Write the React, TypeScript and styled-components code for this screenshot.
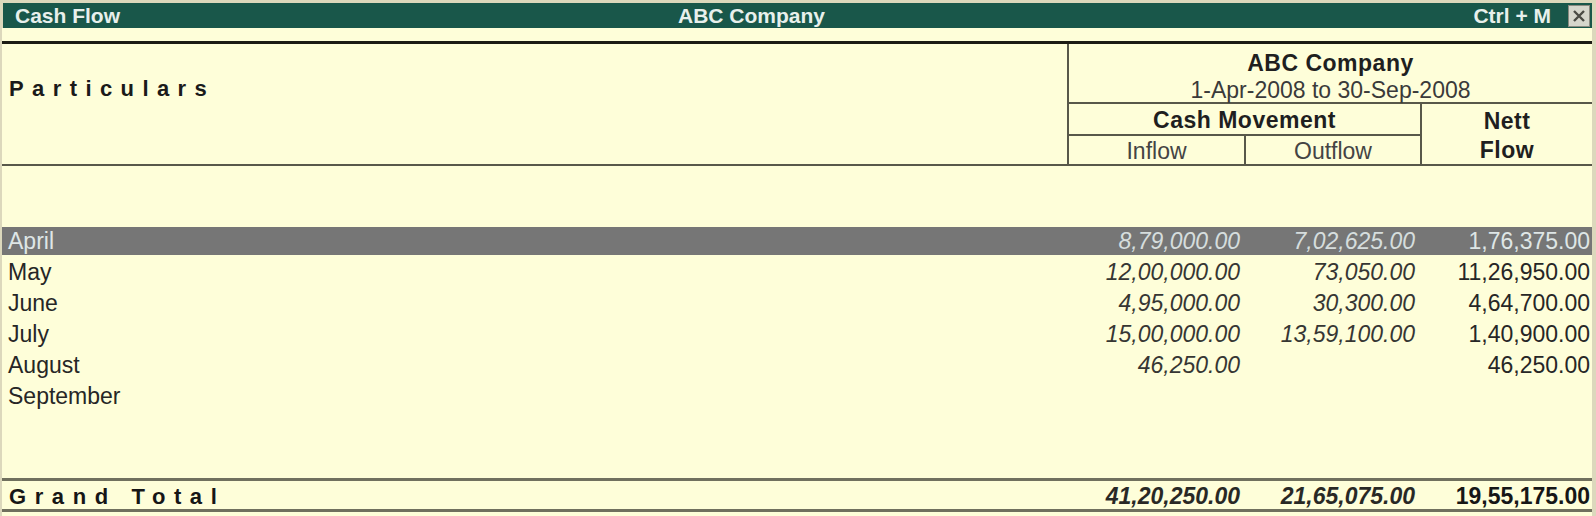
import React from "react";
import styled, { createGlobalStyle } from "styled-components";

const GlobalStyle = createGlobalStyle`
  html, body {
    margin: 0;
    padding: 0;
  }
  body {
    background: #dcd8bc;
    font-family: "Liberation Sans", Arial, sans-serif;
    color: #262626;
  }
`;

const Frame = styled.div`
  height: 516px;
  box-sizing: border-box;
  padding: 3px 4px 0 2px;
  display: flex;
  flex-direction: column;
  overflow: hidden;
`;

const TitleBar = styled.div`
  height: 25px;
  margin-left: 1px;
  padding-left: 12px;
  background: #19574a;
  color: #e8f0ec;
  display: flex;
  align-items: center;
  font-size: 21px;
  font-weight: bold;
`;

const TitleName = styled.div`
  width: 663px;
`;

const Spacer = styled.div`
  flex: 1;
`;

const Shortcut = styled.div`
  margin-right: 17px;
`;

const CloseBox = styled.div`
  width: 22px;
  height: 22px;
  box-sizing: border-box;
  margin-right: 2px;
  background: #d6d6cc;
  border: 1px solid #8a8a80;
  display: flex;
  align-items: center;
  justify-content: center;
`;

const Sheet = styled.div`
  flex: 1;
  background: #fefed9;
  padding-top: 13px;
  display: flex;
  flex-direction: column;
`;

const TopRule = styled.div`
  height: 3px;
  background: #1c1c14;
`;

const HeaderGrid = styled.div`
  display: grid;
  grid-template-columns: 1fr 177px 174px 172px;
  grid-template-rows: 60px 32px 28px;
  border-bottom: 2px solid #58584a;
`;

const ParticularsCell = styled.div`
  grid-column: 1;
  grid-row: 1 / 4;
  border-right: 2px solid #58584a;
  padding: 32px 0 0 7px;
  font-size: 22px;
  font-weight: bold;
  letter-spacing: 8.4px;
  color: #1a1a1a;
`;

const CompanyCell = styled.div`
  grid-column: 2 / 5;
  grid-row: 1;
  border-bottom: 2px solid #58584a;
  padding-top: 6px;
  text-align: center;
  font-size: 23px;
  line-height: 27px;
`;

const CompanyName = styled.div`
  font-weight: bold;
  letter-spacing: 0.5px;
  color: #1f1f1f;
`;

const Period = styled.div`
  color: #3a3a3a;
`;

const HeadCell = styled.div<{ $col: string; $row: string; $bold?: boolean; $bottom?: boolean; $right?: boolean; $left?: boolean }>`
  grid-column: ${(p) => p.$col};
  grid-row: ${(p) => p.$row};
  display: flex;
  flex-direction: column;
  align-items: center;
  justify-content: center;
  padding-top: 3px;
  font-size: 23px;
  line-height: 29px;
  font-weight: ${(p) => (p.$bold ? "bold" : "normal")};
  letter-spacing: ${(p) => (p.$bold ? "0.5px" : "0")};
  color: ${(p) => (p.$bold ? "#1f1f1f" : "#444")};
  border-bottom: ${(p) => (p.$bottom ? "2px solid #58584a" : "none")};
  border-right: ${(p) => (p.$right ? "2px solid #58584a" : "none")};
  border-left: ${(p) => (p.$left ? "2px solid #58584a" : "none")};
`;

const Gap = styled.div<{ $h?: number }>`
  height: ${(p) => (p.$h ? `${p.$h}px` : "auto")};
  flex: ${(p) => (p.$h ? "none" : "1")};
`;

const Row = styled.div<{ $active?: boolean }>`
  display: grid;
  grid-template-columns: 1fr 177px 174px 172px;
  align-items: center;
  height: 31px;
  box-sizing: border-box;
  border-top: 1px solid transparent;
  border-bottom: 2px solid transparent;
  background: ${(p) => (p.$active ? "#767676" : "transparent")};
  background-clip: padding-box;
  font-size: 23px;
  color: ${(p) => (p.$active ? "#dfe6e6" : "#262626")};
`;

const Name = styled.div`
  padding-left: 6px;
`;

const Amount = styled.div<{ $italic?: boolean; $pad: number }>`
  text-align: right;
  padding-right: ${(p) => p.$pad}px;
  font-style: ${(p) => (p.$italic ? "italic" : "normal")};
  opacity: ${(p) => (p.$italic ? 0.92 : 1)};
`;

const TotalRow = styled.div`
  display: grid;
  grid-template-columns: 1fr 177px 174px 172px;
  align-items: center;
  height: 34px;
  box-sizing: border-box;
  padding-top: 2px;
  margin-bottom: 4px;
  border-top: 3px solid #70705e;
  border-bottom: 3px solid #70705e;
  font-size: 23px;
  font-weight: bold;
  color: #161616;
`;

const TotalLabel = styled.div`
  padding-left: 7px;
  font-size: 22px;
  letter-spacing: 8.6px;
`;

const rows = [
  { month: "April", inflow: "8,79,000.00", outflow: "7,02,625.00", nett: "1,76,375.00" },
  { month: "May", inflow: "12,00,000.00", outflow: "73,050.00", nett: "11,26,950.00" },
  { month: "June", inflow: "4,95,000.00", outflow: "30,300.00", nett: "4,64,700.00" },
  { month: "July", inflow: "15,00,000.00", outflow: "13,59,100.00", nett: "1,40,900.00" },
  { month: "August", inflow: "46,250.00", outflow: "", nett: "46,250.00" },
  { month: "September", inflow: "", outflow: "", nett: "" },
];

export default function App() {
  return (
    <>
      <GlobalStyle />
      <Frame>
        <TitleBar>
          <TitleName>Cash Flow</TitleName>
          <div>ABC Company</div>
          <Spacer />
          <Shortcut>Ctrl + M</Shortcut>
          <CloseBox>
            <svg width="14" height="14" viewBox="0 0 14 14">
              <path d="M2 2 L12 12 M12 2 L2 12" stroke="#4a4a44" strokeWidth="2.4" />
            </svg>
          </CloseBox>
        </TitleBar>
        <Sheet>
          <TopRule />
          <HeaderGrid>
            <ParticularsCell>Particulars</ParticularsCell>
            <CompanyCell>
              <CompanyName>ABC Company</CompanyName>
              <Period>1-Apr-2008 to 30-Sep-2008</Period>
            </CompanyCell>
            <HeadCell $col="2 / 4" $row="2" $bold $bottom>
              Cash Movement
            </HeadCell>
            <HeadCell $col="4" $row="2 / 4" $bold $left>
              <div>Nett</div>
              <div>Flow</div>
            </HeadCell>
            <HeadCell $col="2" $row="3" $right>
              Inflow
            </HeadCell>
            <HeadCell $col="3" $row="3">
              Outflow
            </HeadCell>
          </HeaderGrid>
          <Gap $h={60} />
          {rows.map((r, i) => (
            <Row key={r.month} $active={i === 0}>
              <Name>{r.month}</Name>
              <Amount $italic $pad={6}>{r.inflow}</Amount>
              <Amount $italic $pad={5}>{r.outflow}</Amount>
              <Amount $pad={2}>{r.nett}</Amount>
            </Row>
          ))}
          <Gap />
          <TotalRow>
            <TotalLabel>Grand Total</TotalLabel>
            <Amount $italic $pad={6}>41,20,250.00</Amount>
            <Amount $italic $pad={5}>21,65,075.00</Amount>
            <Amount $pad={2}>19,55,175.00</Amount>
          </TotalRow>
        </Sheet>
      </Frame>
    </>
  );
}
